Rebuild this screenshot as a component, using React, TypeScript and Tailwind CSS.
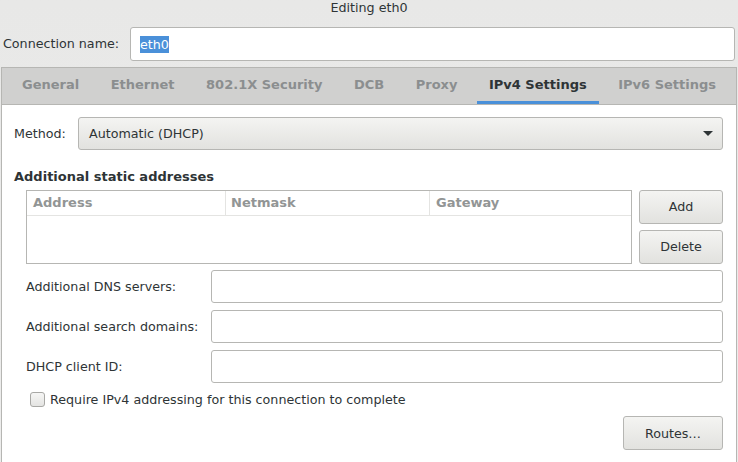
import React from "react";

const font = { fontFamily: '"DejaVu Sans", Verdana, sans-serif' };

function Tab({ label, active }: { label: string; active?: boolean }) {
  return (
    <div
      className={
        "h-full flex items-center px-[12px] font-bold text-[13px] border-b-[3px] " +
        (active ? "text-[#2e3436] border-[#4a90d9]" : "text-[#8b8e8f] border-transparent")
      }
    >
      {label}
    </div>
  );
}

function Entry({ className = "" }: { className?: string }) {
  return (
    <div
      className={
        "h-[33px] bg-white border border-[#b6b6b3] rounded-[3px] " + className
      }
    />
  );
}

function Button({ label, className = "" }: { label: string; className?: string }) {
  return (
    <div
      className={
        "flex items-center justify-center border border-[#b6b6b3] rounded-[3px] bg-gradient-to-b from-[#f4f4f2] to-[#e2e2df] text-[#2e3436] " +
        className
      }
    >
      {label}
    </div>
  );
}

export default function App() {
  return (
    <div
      className="w-[738px] h-[462px] overflow-hidden bg-gradient-to-b from-[#e8e8e7] to-[#ededec] text-[12.7px] text-[#2e3436] flex flex-col"
      style={font}
    >
      <div className="h-[17px] flex items-center justify-center text-[#2e3436] leading-none">
        Editing eth0
      </div>
      <div className="mt-[10px] flex items-center pl-[3px] pr-[3px]">
        <span className="w-[127px]">Connection name:</span>
        <div className="flex-1 h-[34px] bg-white border border-[#b6b6b3] rounded-[3px] flex items-center pl-[9px]">
          <span className="bg-[#4a90d9] text-white leading-[17px]">eth0</span>
        </div>
      </div>
      <div className="mt-[6px] ml-[1px] mr-[1px] flex-1 flex flex-col border border-[#b6b6b3] border-b-0">
        <div className="h-[37px] bg-[#d0d0cf] flex items-stretch pl-[8px] gap-[7.5px] border-b border-[#b6b6b3]">
          <Tab label="General" />
          <Tab label="Ethernet" />
          <Tab label="802.1X Security" />
          <Tab label="DCB" />
          <Tab label="Proxy" />
          <Tab label="IPv4 Settings" active />
          <Tab label="IPv6 Settings" />
        </div>
        <div className="flex-1 bg-white pl-[12px] pr-[13px] pt-[12px] flex flex-col">
          <div className="flex items-center">
            <span className="w-[64px]">Method:</span>
            <div className="flex-1 h-[33px] border border-[#b6b6b3] rounded-[3px] bg-gradient-to-b from-[#f4f4f2] to-[#e2e2df] flex items-center pl-[10px] pr-[9px]">
              <span className="flex-1">Automatic (DHCP)</span>
              <svg width="10" height="6" viewBox="0 0 10 6">
                <path d="M0 0 L10 0 L5 5 Z" fill="#2e3436" />
              </svg>
            </div>
          </div>
          <div className="mt-[19px] font-bold text-[13px] leading-[16px]">Additional static addresses</div>
          <div className="mt-[5px] flex pl-[12px]">
            <div className="flex-1 h-[74px] border border-[#b6b6b3] flex flex-col bg-white">
              <div className="h-[25px] flex border-b border-[#e4e4e2] text-[#929595] font-bold text-[13px]">
                <div className="w-[199px] border-r border-[#e4e4e2] flex items-center pl-[6px]">Address</div>
                <div className="w-[204px] border-r border-[#e4e4e2] flex items-center pl-[5px]">Netmask</div>
                <div className="flex-1 flex items-center pl-[6px]">Gateway</div>
              </div>
            </div>
            <div className="ml-[7px] w-[84px] flex flex-col gap-[6px]">
              <Button label="Add" className="h-[34px]" />
              <Button label="Delete" className="h-[34px]" />
            </div>
          </div>
          <div className="mt-[6px] pl-[12px] flex flex-col gap-[7px]">
            <div className="flex items-center">
              <span className="w-[185px]">Additional DNS servers:</span>
              <Entry className="flex-1" />
            </div>
            <div className="flex items-center">
              <span className="w-[185px]">Additional search domains:</span>
              <Entry className="flex-1" />
            </div>
            <div className="flex items-center">
              <span className="w-[185px]">DHCP client ID:</span>
              <Entry className="flex-1" />
            </div>
          </div>
          <div className="mt-[7px] pl-[16px] flex items-center">
            <div className="w-[15px] h-[15px] border border-[#a8a8a5] rounded-[3px] bg-gradient-to-b from-[#f6f6f5] to-[#e4e4e2]" />
            <span className="ml-[5px]">Require IPv4 addressing for this connection to complete</span>
          </div>
          <div className="mt-[7px] flex justify-end">
            <Button label="Routes…" className="w-[100px] h-[34px]" />
          </div>
        </div>
      </div>
    </div>
  );
}
